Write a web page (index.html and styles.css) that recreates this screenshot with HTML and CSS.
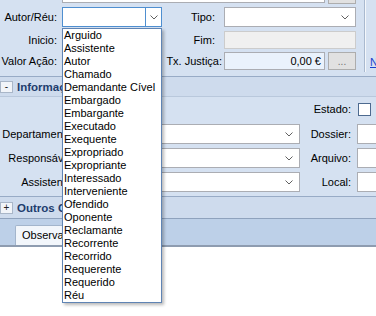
FILE: index.html
```html
<!DOCTYPE html>
<html>
<head>
<meta charset="utf-8">
<link rel="stylesheet" href="styles.css">
</head>
<body>
<div class="form">
  <div class="top">
    <div class="top-main">
      <div class="edge-row">
        <div class="edge-box"></div>
        <div class="edge-btn"></div>
      </div>
      <div class="row r1">
        <span class="lbl">Autor/Réu:</span>
        <div class="combo focus w100">
          <span class="combo-btn"><svg width="8" height="5" viewBox="0 0 8 5"><polyline points="0.5,0.5 4,4 7.5,0.5" fill="none" stroke="#606060" stroke-width="1"/></svg></span>
        </div>
        <span class="lbl2 short">Tipo:</span>
        <div class="combo w132">
          <span class="chev"><svg width="8" height="5" viewBox="0 0 8 5"><polyline points="0.5,0.5 4,4 7.5,0.5" fill="none" stroke="#606060" stroke-width="1"/></svg></span>
        </div>
      </div>
      <div class="row r2">
        <span class="lbl">Inicio:</span>
        <div class="input w100"></div>
        <span class="lbl2 short">Fim:</span>
        <div class="input disabled w132"></div>
      </div>
      <div class="row r3">
        <span class="lbl">Valor Ação:</span>
        <div class="input w100"></div>
        <span class="lbl2">Tx. Justiça:</span>
        <div class="input money w101">0,00 €</div>
        <div class="btn">...</div>
      </div>
    </div>
    <div class="sep"></div>
    <div class="top-side"><a class="link">Novo</a></div>
  </div>

  <div class="section">
    <span class="toggle">-</span>
    <span class="sec-title">Informações</span>
  </div>

  <div class="lower">
    <div class="lrow estado">
      <div class="lleft"></div>
      <span class="rlbl">Estado:</span>
      <span class="check"></span>
    </div>
    <div class="lrow">
      <div class="lleft">
        <span class="clip"><span class="llbl">Departamento:</span></span>
        <div class="combo wl"><span class="chev"><svg width="8" height="5" viewBox="0 0 8 5"><polyline points="0.5,0.5 4,4 7.5,0.5" fill="none" stroke="#606060" stroke-width="1"/></svg></span></div>
      </div>
      <span class="rlbl">Dossier:</span>
      <div class="input wr"></div>
    </div>
    <div class="lrow">
      <div class="lleft">
        <span class="clip"><span class="llbl">Responsável:</span></span>
        <div class="combo wl"><span class="chev"><svg width="8" height="5" viewBox="0 0 8 5"><polyline points="0.5,0.5 4,4 7.5,0.5" fill="none" stroke="#606060" stroke-width="1"/></svg></span></div>
      </div>
      <span class="rlbl">Arquivo:</span>
      <div class="input wr"></div>
    </div>
    <div class="lrow">
      <div class="lleft">
        <span class="clip"><span class="llbl">Assistente:</span></span>
        <div class="combo wl"><span class="chev"><svg width="8" height="5" viewBox="0 0 8 5"><polyline points="0.5,0.5 4,4 7.5,0.5" fill="none" stroke="#606060" stroke-width="1"/></svg></span></div>
      </div>
      <span class="rlbl">Local:</span>
      <div class="input wr"></div>
    </div>
  </div>

  <div class="section sec2">
    <span class="toggle">+</span>
    <span class="sec-title">Outros Campos</span>
  </div>

  <div class="tabstrip">
    <div class="tab"><span class="tab-text">Observações</span></div>
  </div>
  <div class="white"></div>

  <ul class="dropdown">
    <li>Arguido</li>
    <li>Assistente</li>
    <li>Autor</li>
    <li>Chamado</li>
    <li>Demandante Cível</li>
    <li>Embargado</li>
    <li>Embargante</li>
    <li>Executado</li>
    <li>Exequente</li>
    <li>Expropriado</li>
    <li>Expropriante</li>
    <li>Interessado</li>
    <li>Interveniente</li>
    <li>Ofendido</li>
    <li>Oponente</li>
    <li>Reclamante</li>
    <li>Recorrente</li>
    <li>Recorrido</li>
    <li>Requerente</li>
    <li>Requerido</li>
    <li>Réu</li>
  </ul>
</div>
</body>
</html>
```

FILE: styles.css
```css
* { box-sizing: border-box; }
html, body { margin: 0; padding: 0; background: #ffffff; }
body { width: 376px; height: 316px; overflow: hidden; }

.form {
  position: relative;
  width: 376px;
  height: 316px;
  overflow: hidden;
  background: #d5e1f1;
  font-family: "Liberation Sans", Arial, sans-serif;
  font-size: 11px;
  color: #000;
}

/* top block */
.top { display: flex; height: 76px; }
.top-main { width: 364px; flex: none; }
.sep { flex: none; border-left: 1px solid #a9b9cf; background: #f4f7fb; height: 72px; width: 2px; }
.top-side { flex: none; padding-left: 4px; padding-top: 56px; width: 10px; overflow: hidden; }
.link { color: #1a3fcc; text-decoration: underline; white-space: nowrap; }

.edge-row { display: flex; height: 4px; padding-left: 62px; align-items: flex-start; }
.edge-box { width: 263px; height: 3px; background: #fff; border: 1px solid #abadb3; border-top: none; margin-right: 3px; }
.edge-btn { width: 28px; height: 4px; background: #e1e1e1; border: 1px solid #adadad; border-top: none; }

.row { display: flex; align-items: center; }
.r1 { margin-top: 3px; height: 20px; }
.r2 { margin-top: 4px; height: 18px; }
.r3 { margin-top: 3px; height: 18px; }

.lbl { width: 57px; margin-right: 5px; text-align: right; white-space: nowrap; flex: none; }
.lbl2 { width: 60px; margin-right: 2px; text-align: right; white-space: nowrap; flex: none; }
.lbl2.short { padding-right: 7px; }

.combo {
  height: 20px;
  background: #fff;
  border: 1px solid #abadb3;
  display: flex;
  justify-content: flex-end;
  align-items: center;
  flex: none;
}
.combo.focus { border-color: #4f8fd0; }
.combo-btn {
  width: 16px;
  height: 18px;
  border-left: 1px solid #4f8fd0;
  display: flex;
  align-items: center;
  justify-content: center;
  background: #fff;
}
.chev { width: 16px; display: flex; align-items: center; justify-content: center; margin-right: 2px; }
.chev svg, .combo-btn svg { display: block; }

.input { height: 18px; background: #fff; border: 1px solid #abadb3; flex: none; }
.input.disabled { background: #f0f0f0; border-color: #cccccc; }
.input.money { background: #eaf2fc; text-align: right; padding-right: 3px; line-height: 16px; margin-right: 3px; }
.btn {
  width: 28px; height: 18px; flex: none;
  background: #e1e1e1; border: 1px solid #adadad;
  color: #707070; text-align: center; line-height: 18px; font-size: 10px;
}
.w100 { width: 100px; }
.w101 { width: 101px; }
.w132 { width: 132px; }

/* section headers */
.section {
  display: flex;
  align-items: center;
  height: 21px;
  border-top: 1px solid #98abc6;
  border-bottom: 1px solid #b9c8dc;
  background: #cedbed;
}
.toggle {
  width: 13px; height: 12px; flex: none;
  background: #f1f4f9; border: 1px solid #a9b6c8;
  font-size: 10px; line-height: 10px; text-align: center; color: #222;
  margin-right: 4px;
}
.sec-title {
  font-weight: bold; color: #1e3d6e; font-size: 11.5px; white-space: nowrap;
  width: 45px; overflow: hidden; flex: none;
}

/* lower block */
.lower { padding-top: 3px; height: 99px; }
.lrow { display: flex; align-items: center; height: 20px; margin-bottom: 4px; }
.lrow.estado { height: 18px; margin-bottom: 6px; }
.lleft { width: 300px; flex: none; display: flex; align-items: center; }
.clip { width: 62px; overflow: hidden; flex: none; display: flex; justify-content: flex-start; }
.llbl { width: 75px; text-align: right; white-space: nowrap; flex: none; }
.combo.wl { width: 221px; margin-left: 17px; }
.rlbl { width: 51px; margin-right: 6px; text-align: right; flex: none; white-space: nowrap; }
.wr { width: 40px; height: 20px; }
.check { width: 13px; height: 13px; flex: none; background: #fff; border: 1px solid #4d6a8f; margin-left: 1px; }

.sec2 { height: 23px; border-bottom-color: #8fa2bd; }

.tabstrip {
  height: 28px;
  background: #bdd0e8;
  border-bottom: 2px solid #8e9cb0;
  padding-left: 15px;
  padding-top: 6px;
}
.tab {
  width: 82px; height: 20px;
  background: #f2f6fb;
  border: 1px solid #a3b5cc;
  border-bottom: none;
  border-radius: 2px 2px 0 0;
  padding-left: 6px;
  line-height: 19px;
  white-space: nowrap;
}
.tab-text { display: inline-block; width: 40px; overflow: hidden; vertical-align: top; }
.white { background: #fff; height: 80px; }

/* dropdown list overlay */
.dropdown {
  position: absolute;
  left: 62px;
  top: 28px;
  width: 100px;
  height: 275px;
  margin: 0;
  padding: 0 0 0 1px;
  list-style: none;
  background: #fff;
  border: 1px solid #5f84b4;
  box-shadow: 2px 2px 3px rgba(0,0,0,0.28);
}
.dropdown li { height: 13px; line-height: 13px; white-space: nowrap; }
```
